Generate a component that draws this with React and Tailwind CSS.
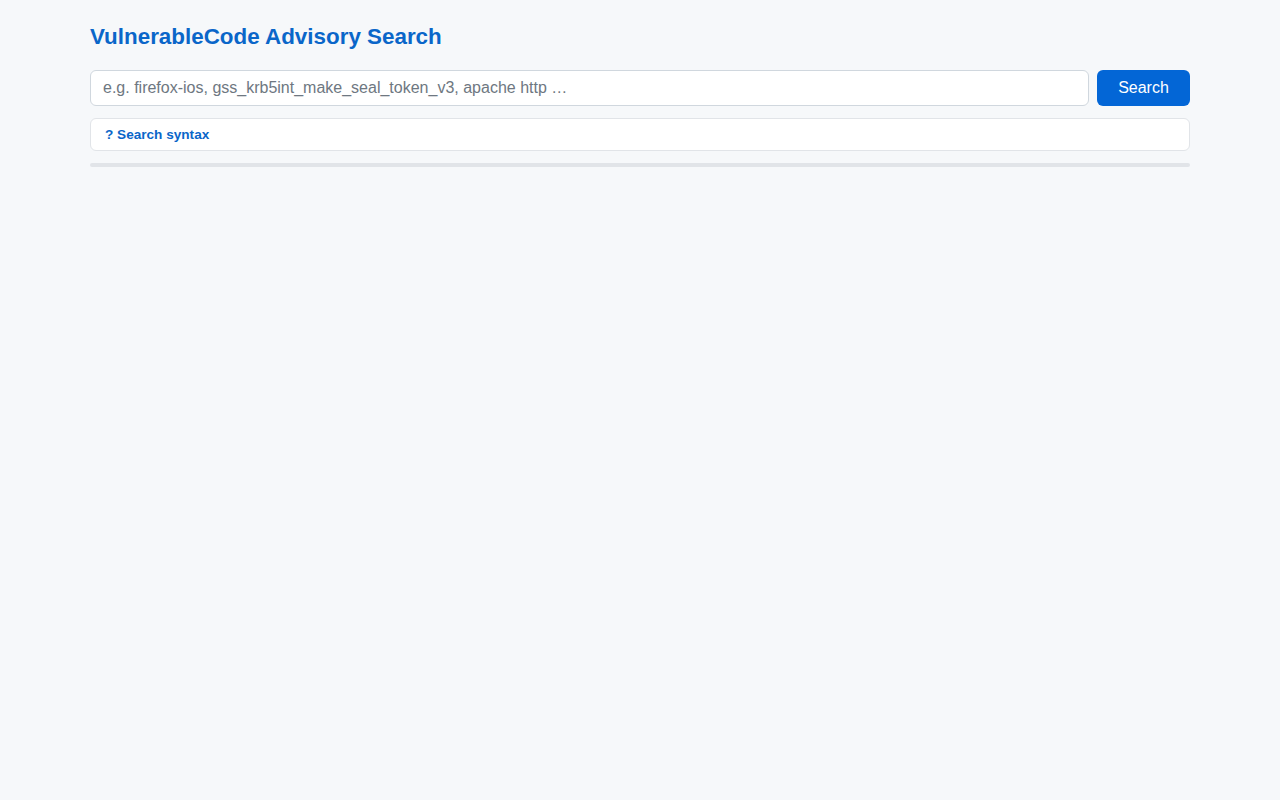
import React, { useState } from "react";

const App = () => {
  const [q, setQ] = useState("");

  return (
    <div className="min-h-screen bg-[#f6f8fa] font-['Liberation_Sans',Arial,sans-serif]">
      <div className="w-[1100px] mx-auto pt-[23px]">
        <h1 className="text-[22.4px] leading-[28px] font-bold text-[#0a66c9]">VulnerableCode Advisory Search</h1>

        {/* Search bar */}
        <div className="flex gap-2 mt-[19px]">
          <input
            value={q}
            onChange={(e) => setQ(e.target.value)}
            placeholder="e.g. firefox-ios, gss_krb5int_make_seal_token_v3, apache http …"
            className="flex-1 h-9 px-3 text-base bg-white border border-[#d0d7de] rounded-md text-gray-800 placeholder:text-[#6e7781] outline-none"
          />
          <button className="w-[93px] h-9 rounded-md bg-[#0366d6] text-white text-base">Search</button>
        </div>

        {/* Syntax help */}
        <details className="mt-3 bg-white border border-[#e1e4e8] rounded-md">
          <summary className="list-none px-[14px] pt-[2px] h-[31px] flex items-center text-[13.6px] font-bold text-[#0a66c9] cursor-pointer">
            ? Search syntax
          </summary>
        </details>

        <div className="mt-3 h-1 rounded bg-[#e1e4e8]" />
      </div>
    </div>
  );
};

export default App;
